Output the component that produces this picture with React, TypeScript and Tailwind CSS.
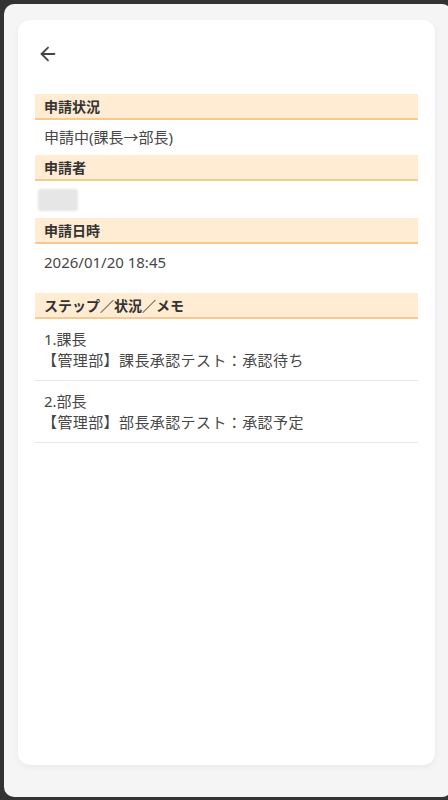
import { ArrowLeft } from 'lucide-react';

const FONT = { fontFamily: '"Noto Sans", "Noto Sans CJK JP", sans-serif' };

function SectionHeader({ label }: { label: string }) {
  return (
    <div className="bg-[#ffecd2] border-b-2 border-[#f8c98c] px-[9px] h-[26px] flex items-center text-[14px] font-bold text-[#333]">
      {label}
    </div>
  );
}

const STEPS = [
  { step: '1.課長', memo: '【管理部】課長承認テスト：承認待ち' },
  { step: '2.部長', memo: '【管理部】部長承認テスト：承認予定' },
];

export default function App() {
  return (
    <div className="w-[448px] h-[800px] bg-[#333333] pt-[4px] pl-[4px] overflow-hidden" style={FONT}>
      <div className="w-[448px] h-[793px] bg-[#f5f5f5] rounded-[10px] pt-[16px] pl-[14px] pr-[17px] pb-[32px]">
        <div className="h-full bg-white rounded-[12px] shadow-[0_2px_6px_rgba(0,0,0,0.05)] px-[17px] pt-[22px]">
          <button className="w-[24px] h-[24px] flex items-center justify-center ml-[1px] text-[#444]">
            <ArrowLeft size={22} strokeWidth={2} />
          </button>

          <div className="mt-[28px]">
            <SectionHeader label="申請状況" />
            <div className="px-[9px] h-[35px] flex items-center text-[15px] text-[#474747]">申請中(課長→部長)</div>

            <SectionHeader label="申請者" />
            <div className="h-[37px] flex items-center">
              <div className="ml-[3px] w-[40px] h-[22px] bg-[#e6e6e6] rounded-[2px] blur-[1px]" />
            </div>

            <SectionHeader label="申請日時" />
            <div className="px-[9px] h-[36px] flex items-center text-[15px] text-[#474747]">2026/01/20 18:45</div>

            <div className="mt-[13px]">
              <SectionHeader label="ステップ／状況／メモ" />
              {STEPS.map(s => (
                <div key={s.step} className="px-[9px] pt-[10px] pb-[9px] border-b border-[#e8e8e8] text-[15px] leading-[21px] text-[#474747]">
                  <div>{s.step}</div>
                  <div className="-ml-[2px] tracking-[0.4px]">{s.memo}</div>
                </div>
              ))}
            </div>
          </div>
        </div>
      </div>
    </div>
  );
}
